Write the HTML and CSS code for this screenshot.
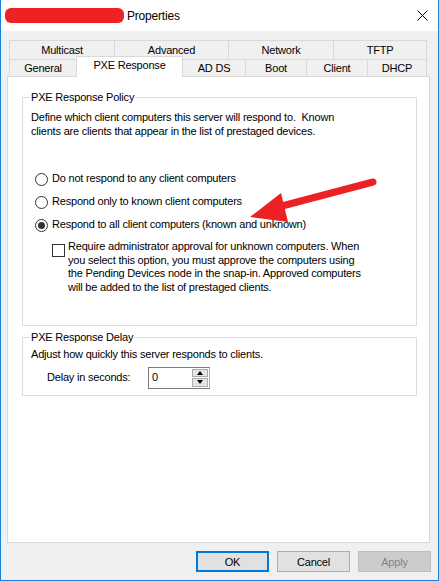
FILE: index.html
```html
<!DOCTYPE html>
<html lang="en">
  <head>
    <meta charset="UTF-8" />
    <title>Properties</title>
    <link rel="stylesheet" href="styles.css">
  </head>
  <body>
    <div class="window">
      <div class="titlebar">
        <span class="redacted"></span>
        <span class="title">Properties</span>
        <svg class="close" width="11" height="11" viewBox="0 0 11 11">
          <path d="M0.5 0.5 L10.5 10.5 M10.5 0.5 L0.5 10.5" stroke="#000" stroke-width="1" fill="none" />
        </svg>
      </div>

      <div class="content">
        <div class="tabs">
          <div class="tab-row top-row">
            <div class="tab t-multicast">Multicast</div>
            <div class="tab t-advanced">Advanced</div>
            <div class="tab t-network">Network</div>
            <div class="tab t-tftp">TFTP</div>
          </div>
          <div class="tab-row bottom-row">
            <div class="tab t-general">General</div>
            <div class="tab t-pxe selected">PXE Response</div>
            <div class="tab t-adds">AD DS</div>
            <div class="tab t-boot">Boot</div>
            <div class="tab t-client">Client</div>
            <div class="tab t-dhcp">DHCP</div>
          </div>
        </div>

        <div class="panel">
          <div class="group policy">
            <div class="group-label">PXE Response Policy</div>
            <p class="desc">
              Define which client computers this server will respond to.&nbsp; Known<br>
              clients are clients that appear in the list of prestaged devices.
            </p>
            <div class="radio-row first">
              <span class="radio"></span>
              <span>Do not respond to any client computers</span>
            </div>
            <div class="radio-row">
              <span class="radio"></span>
              <span>Respond only to known client computers</span>
            </div>
            <div class="radio-row">
              <span class="radio checked"></span>
              <span>Respond to all client computers (known and unknown)</span>
            </div>
            <div class="check-row">
              <span class="checkbox"></span>
              <span class="check-text">
                Require administrator approval for unknown computers. When<br>
                you select this option, you must approve the computers using<br>
                the Pending Devices node in the snap-in. Approved computers<br>
                will be added to the list of prestaged clients.
              </span>
            </div>
          </div>

          <div class="group delay">
            <div class="group-label">PXE Response Delay</div>
            <p class="adjust">Adjust how quickly this server responds to clients.</p>
            <div class="delay-row">
              <span class="delay-label">Delay in seconds:</span>
              <div class="spinner">
                <span class="spin-value">0</span>
                <div class="spin-buttons">
                  <span class="spin-btn"><span class="tri up"></span></span>
                  <span class="spin-btn"><span class="tri down"></span></span>
                </div>
              </div>
            </div>
          </div>
        </div>

        <div class="buttons">
          <button class="btn default">OK</button>
          <button class="btn">Cancel</button>
          <button class="btn disabled">Apply</button>
        </div>
      </div>

      <svg class="arrow" width="439" height="581" viewBox="0 0 439 581">
        <line x1="373" y1="182" x2="282" y2="206" stroke="#ed2024" stroke-width="7" stroke-linecap="round" />
        <polygon points="250,217 281,193 288,222" fill="#ed2024" />
      </svg>
    </div>
  </body>
</html>
```

FILE: styles.css
```css
* {
  margin: 0;
  padding: 0;
  box-sizing: border-box;
}

body {
  font-family: "Liberation Sans", Arial, sans-serif;
  font-size: 11px;
  letter-spacing: -0.2px;
  color: #000;
  background: #fff;
}

.window {
  position: relative;
  width: 439px;
  height: 581px;
  border: 1px solid #1883d7;
  border-top: none;
  background: #f0f0f0;
}

.titlebar {
  height: 31px;
  background: #fff;
  display: flex;
  align-items: center;
  padding-left: 4px;
}

.redacted {
  width: 119px;
  height: 15px;
  background: #ee2124;
  border-radius: 6px;
}

.title {
  margin-left: 3px;
  font-size: 12px;
  line-height: 14px;
}

.close {
  margin-left: auto;
  margin-right: 10px;
}

.content {
  padding: 9px 7px 0 6px;
}

/* tabs */
.tabs {
  margin-left: 2px;
}

.tab-row {
  display: flex;
  align-items: flex-end;
}

.top-row {
  height: 19px;
}

.bottom-row {
  height: 17px;
}

.tab {
  border: 1px solid #d9d9d9;
  border-bottom: none;
  background: #f0f0f0;
  margin-left: -1px;
  text-align: center;
}

.tab:first-child {
  margin-left: 0;
}

.top-row .tab {
  height: 19px;
  line-height: 18px;
}

.bottom-row .tab {
  height: 17px;
  line-height: 16px;
}

.bottom-row .tab.selected {
  position: relative;
  top: 1px;
  height: 21px;
  line-height: 17px;
  background: #fff;
  z-index: 1;
}

.t-multicast { width: 106px; }
.t-advanced { width: 115px; }
.t-network { width: 106px; }
.t-tftp { width: 94px; }
.t-general { width: 68px; }
.t-pxe { width: 107px; }
.t-adds { width: 64px; }
.t-boot { width: 62px; }
.t-client { width: 62px; }
.t-dhcp { width: 60px; }

/* panel */
.panel {
  width: 423px;
  height: 467px;
  background: #fff;
  border: 1px solid #d9d9d9;
  padding-top: 20px;
}

.group {
  border: 1px solid #dcdcdc;
  margin: 0 12px 0 14px;
  padding: 0 8px 0 8px;
  line-height: 13.5px;
}

.group-label {
  width: fit-content;
  background: #fff;
  margin: -8px 0 0 -1px;
  padding: 0 1px;
  line-height: 14px;
}

.desc {
  margin-top: 7px;
}

.policy {
  padding-bottom: 31px;
}

.radio-row {
  display: flex;
  align-items: center;
  height: 14px;
  margin-top: 9px;
  margin-left: 4px;
}

.radio-row.first {
  margin-top: 34px;
}

.radio {
  width: 13px;
  height: 13px;
  border: 1px solid #333;
  border-radius: 50%;
  margin-right: 4px;
  display: flex;
  align-items: center;
  justify-content: center;
}

.radio.checked::after {
  content: "";
  width: 7px;
  height: 7px;
  border-radius: 50%;
  background: #333;
}

.check-row {
  display: flex;
  align-items: flex-start;
  margin-top: 8px;
  margin-left: 21px;
}

.checkbox {
  flex: none;
  width: 13px;
  height: 13px;
  border: 1px solid #333;
  margin-top: 4px;
  margin-right: 3px;
}

.delay {
  margin-top: 11px;
  padding-bottom: 6px;
}

.adjust {
  margin-top: 4px;
}

.delay-row {
  display: flex;
  align-items: center;
  margin-top: 5px;
}

.delay-label {
  margin-left: 16px;
  width: 101px;
}

.spinner {
  display: flex;
  width: 62px;
  height: 22px;
  border: 1px solid #7a7a7a;
  border-right-color: #adadad;
}

.spin-value {
  flex: 1;
  padding-left: 3px;
  line-height: 19px;
}

.spin-buttons {
  width: 17px;
  display: flex;
  flex-direction: column;
  gap: 1px;
  padding: 1px 1px 1px 0;
}

.spin-btn {
  flex: 1;
  background: #e5e5e5;
  border: 1px solid #adadad;
  display: flex;
  align-items: center;
  justify-content: center;
}

.tri {
  width: 0;
  height: 0;
  border-left: 3.5px solid transparent;
  border-right: 3.5px solid transparent;
}

.tri.up {
  border-bottom: 4px solid #000;
}

.tri.down {
  border-top: 4px solid #000;
}

/* bottom buttons */
.buttons {
  display: flex;
  justify-content: flex-end;
  gap: 8px;
  margin-top: 8px;
}

.btn {
  width: 73px;
  height: 21px;
  font-family: "Liberation Sans", Arial, sans-serif;
  font-size: 11px;
  letter-spacing: -0.2px;
  background: #e1e1e1;
  border: 1px solid #adadad;
  color: #000;
}

.btn.default {
  border: 2px solid #0078d7;
}

.btn.disabled {
  background: #cccccc;
  border-color: #bfbfbf;
  color: #838383;
}

.arrow {
  position: absolute;
  left: -1px;
  top: 0;
  pointer-events: none;
}
```
